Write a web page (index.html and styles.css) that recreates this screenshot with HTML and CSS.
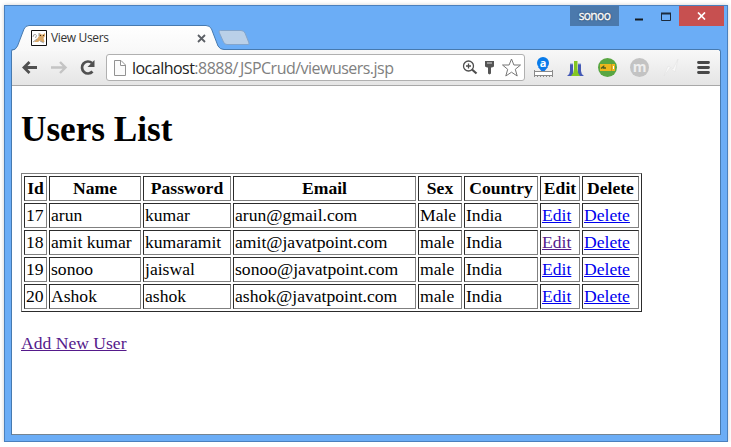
FILE: index.html
```html
<!DOCTYPE html>
<html lang="en">
<head>
<meta charset="utf-8">
<title>View Users</title>
<link rel="stylesheet" href="styles.css">
</head>
<body>
<div class="window">
  <header class="titlebar">
    <div class="tabstrip">
      <svg class="tab-shape" width="244" height="26" viewBox="0 0 244 26">
        <defs><linearGradient id="tabfill" x1="0" y1="0" x2="0" y2="1"><stop offset="0" stop-color="#fff"/><stop offset="1" stop-color="#f8f8f8"/></linearGradient></defs>
        <path d="M0 26V25.500Q5 25 6.500 21L13 4Q14.500.5 18 .5H195Q199 .5 200.500 4L207 21Q209 24.500 213 24.500V26Z" fill="url(#tabfill)"/>
        <path d="M0 25.500Q5 25 6.500 21L13 4Q14.500.5 18 .5H195Q199 .5 200.500 4L207 21Q209 24.500 213 24.500" fill="none" stroke="#477aaf"/>
        <path d="M209.500 5.500H230Q233 5.500 234 8L238 18Q238.500 19.500 237 19.500H216Q213.500 19.500 212.500 17L208 7Q207.500 5.500 209.500 5.500Z" fill="#bad0e8" stroke="#83a5cc"/>
      </svg>
      <div class="tab">
        <svg class="favicon" width="16" height="16" viewBox="0 0 16 16">
          <path fill="#fff" stroke="#111" d="M.5.500H15.500V15.500H.5Z"/>
          <path fill="#d9a868" d="M6 9L8 6 8.500 3 10.500 4.500H12L14 3V6L12.500 8 13.500 12H11L9 10.500 7 12H3L5 10Z"/>
          <path fill="none" stroke="#888" stroke-width=".8" d="M2 7Q2 4 4.500 4.500 6.500 5 4.500 8M2 12L6 9M9 11L13 13M8 3V6"/>
          <path fill="#3a2a18" d="M9 5h1v1H9zM12 5h1v1h-1z"/>
        </svg>
        <span class="tab-title">View Users</span>
        <svg class="tab-close" width="9" height="9" viewBox="0 0 9 9"><path d="M1 1L8 8M8 1L1 8" stroke="#5c6066" stroke-width="1.800"/></svg>
      </div>
    </div>
    <div class="controls">
      <span class="profile">sonoo</span>
      <svg class="minmax" width="60" height="20" viewBox="0 0 60 20"><path d="M16 12.500H24V14.500H16Z" fill="#151a20"/><path d="M42.500 7.500H51.500V14.500H42.500Z" fill="none" stroke="#1b2a3c"/><path d="M42 7.500H52" stroke="#1b2a3c" stroke-width="2"/></svg>
      <span class="close"><svg width="9" height="8" viewBox="0 0 9 8"><path d="M1 .5L8 7.500M8 .5L1 7.500" stroke="#fff" stroke-width="1.700"/></svg></span>
    </div>
  </header>
  <div class="viewport">
    <nav class="toolbar">
      <svg width="86" height="35" viewBox="0 0 86 35">
        <path d="M27 17.500H15M19.500 12L14 17.500 19.500 23" fill="none" stroke="#505050" stroke-width="2.800"/>
        <path d="M41 17.500H54M50 12L55.500 17.500 50 23" fill="none" stroke="#c4c4c4" stroke-width="2.400"/>
        <path d="M82.500 21.500A6 6 0 1 1 82 13" fill="none" stroke="#505050" stroke-width="2.700"/>
        <path d="M84.500 10V17H77.500Z" fill="#505050"/>
      </svg>
      <div class="omnibox">
        <svg class="page-icon" width="12" height="16" viewBox="0 0 12 16"><path d="M.5.500H7L11.500 5V15.500H.5ZM6.500.500V5.500H11.500" fill="#fbfbfb" stroke="#929292"/></svg>
        <span class="url"><b>localhost</b>:8888<span class="slash">/</span>JSPCrud/viewusers.jsp</span>
        <svg class="box-icons" width="64" height="25" viewBox="0 0 64 25">
          <g fill="none" stroke="#4e4e4e" stroke-width="1.300"><circle cx="6.500" cy="11" r="5"/><path d="M10 14.500L14.500 18.500" stroke-width="2.200"/><path d="M4 11H9M6.500 8.500V13.500"/></g>
          <path d="M23 6H32V11.500L30 12.500H29V18.500L27.500 19.500 26 18.500V12.500H25L23 11.500Z" fill="#555"/><path d="M25 8H30" stroke="#ddd"/>
          <path d="M49.500 4L51.900 10H58.500L53.300 14.300 55.200 21 49.500 17.200 43.800 21 45.700 14.300 40.500 10H47.100Z" fill="#fff" stroke="#777" stroke-linejoin="round"/>
        </svg>
      </div>
      <svg class="extensions" width="186" height="35" viewBox="0 0 186 35">
        <path d="M4 17L9 23 14 17Z" fill="#1478e8"/><circle cx="9" cy="13" r="6" fill="#087bea"/>
        <text x="9" y="17" class="badge-a">a</text>
        <path d="M.5 21.500H18.500V25.500H.5Z" fill="#fff"/><path d="M0 21.500H19M0 25.500H19M.5 20V27M18.500 20V27M3.500 25v2M6.500 25v2M9.500 25v2M12.500 25v2M15.500 25v2" stroke="#8a8a8a"/>
        <path d="M33 26Q36 24 36 21V14H39V26ZM50 26Q47 24 47 21V14H44V26Z" fill="#4459b5"/><path d="M37 26Q40 23 40 19V11H43.500V19Q43.500 23 46 26Z" fill="#83c622"/><path d="M36 14h3M44 14h3" stroke="#8b9ed3"/>
        <circle cx="73.500" cy="17.500" r="9.500" fill="#59a642"/><path d="M66 14H81V21H66Z" fill="#edb71c"/><path d="M67 18.500L69.500 16.500V18H72" fill="none" stroke="#4d5d20" stroke-width="1.500"/><path d="M77.500 14V21" stroke="#c79522"/><path d="M79 16h1v3h-1z" fill="#fff"/>
        <circle cx="105.500" cy="17.500" r="9.500" fill="#c3c3c3"/><text x="105.500" y="22" class="badge-m">m</text>
        <path d="M130 26L134 16 139 19 144 9 141 22 136 18Z" fill="#f8f8f8" stroke="#e2e2e2" stroke-width=".6"/>
        <path d="M164.500 12.500H174.500M164.500 17.500H174.500M164.500 22.500H174.500" stroke="#484848" stroke-width="2.800" stroke-linecap="round"/>
      </svg>
    </nav>
    <main class="page">
      <h1>Users List</h1>
      <table>
        <colgroup><col class="c-id"><col class="c-name"><col class="c-pass"><col class="c-email"><col class="c-sex"><col class="c-country"><col class="c-edit"><col class="c-del"></colgroup>
        <tr><th>Id</th><th>Name</th><th>Password</th><th>Email</th><th>Sex</th><th>Country</th><th>Edit</th><th>Delete</th></tr>
        <tr><td>17</td><td>arun</td><td>kumar</td><td>arun@gmail.com</td><td>Male</td><td>India</td><td><a href="#e17">Edit</a></td><td><a href="#d17">Delete</a></td></tr>
        <tr><td>18</td><td>amit kumar</td><td>kumaramit</td><td>amit@javatpoint.com</td><td>male</td><td>India</td><td><a class="visited" href="#e18">Edit</a></td><td><a href="#d18">Delete</a></td></tr>
        <tr><td>19</td><td>sonoo</td><td>jaiswal</td><td>sonoo@javatpoint.com</td><td>male</td><td>India</td><td><a href="#e19">Edit</a></td><td><a href="#d19">Delete</a></td></tr>
        <tr><td>20</td><td>Ashok</td><td>ashok</td><td>ashok@javatpoint.com</td><td>male</td><td>India</td><td><a href="#e20">Edit</a></td><td><a href="#d20">Delete</a></td></tr>
      </table>
      <p class="add"><a class="visited" href="#add">Add New User</a></p>
    </main>
  </div>
</div>
</body>
</html>
```
FILE: styles.css
```css
* { box-sizing: border-box; }
body { margin: 0; background: #fff; overflow: hidden; }
svg { display: block; flex: none; }
.window {
  display: flex; flex-direction: column;
  width: 724px; height: 437px; margin: 5px 0 0 4px;
  padding: 0 6px 6px;
  background: #6badf6; border: 1px solid #4a80bd;
  box-shadow: 0 0 4px rgba(0,0,0,.2);
}
.titlebar { display: flex; justify-content: space-between; height: 43px; flex: none; }
.tabstrip { position: relative; width: 250px; padding-top: 20px; }
.tab-shape { position: absolute; left: 0; top: 19px; z-index: 1; }
.tab { position: relative; z-index: 2; display: flex; align-items: center; height: 24px; padding-left: 20px; }
.tab-title { width: 144px; margin-left: 4px; font: 12px/16px "Open Sans", sans-serif; letter-spacing: -.35px; color: #333; }
.tab-close { margin-left: 2px; }
.controls { display: flex; height: 20px; margin-right: -3px; }
.profile { width: 49px; background: #4b79ac; color: #fff; font: 12px/20px "Open Sans", sans-serif; letter-spacing: -.6px; -webkit-text-stroke: .3px #fff; text-align: center; text-shadow: 0 0 2px #222; }
.close { display: flex; align-items: center; justify-content: center; width: 45px; background: #c75050; }
.viewport {
  display: flex; flex-direction: column; flex: 1;
  background: #fff; border: 1px solid #477aaf; border-bottom-color: #758491;
  border-radius: 3px 3px 0 0;
}
.toolbar {
  display: flex; align-items: center; height: 36px; flex: none;
  background: linear-gradient(#f8f8f8, #e5e5e5); border-bottom: 1px solid #a8a8a8; border-radius: 3px 3px 0 0;
}
.toolbar > svg:first-child { margin-left: -2px; }
.omnibox {
  display: flex; align-items: center; width: 419px; height: 27px; margin-left: 10px; padding-left: 7px; flex: none;
  background: #fff; border: 1px solid #b0b0b0; border-radius: 3px;
}
.url { flex: none; width: 328px; margin-left: 6px; font: 16px/24px "Open Sans", sans-serif; letter-spacing: -.52px; color: #808080; white-space: nowrap; }
.url b { font-weight: 400; color: #222; }
.slash { letter-spacing: 1.5px; }
.box-icons { margin-left: 2px; }
.extensions { margin-left: 9px; }
.badge-a { font: bold 11px "Open Sans", sans-serif; fill: #fff; text-anchor: middle; }
.badge-m { font: bold 14px "Open Sans", sans-serif; fill: #eee; text-anchor: middle; }
.page { padding: 0 9px; font: 17.6px/21px "Liberation Serif", serif; color: #000; }
h1 { margin: 24px 0 23px; font-size: 35.2px; line-height: 40px; }
table { table-layout: fixed; width: 621px; font: inherit; border: 1px outset gray; border-spacing: 2px; }
th, td { height: 25px; padding: 1px; border: 1px inset gray; white-space: nowrap; }
.c-id { width: 23px; }
.c-name { width: 92px; }
.c-pass { width: 88px; }
.c-email { width: 183px; }
.c-sex { width: 44px; }
.c-country { width: 74px; }
.c-edit { width: 40px; }
.c-del { width: 57px; }
a { color: #00e; }
a.visited { color: #551a8b; }
.add { margin: 21px 0 0; }
```
